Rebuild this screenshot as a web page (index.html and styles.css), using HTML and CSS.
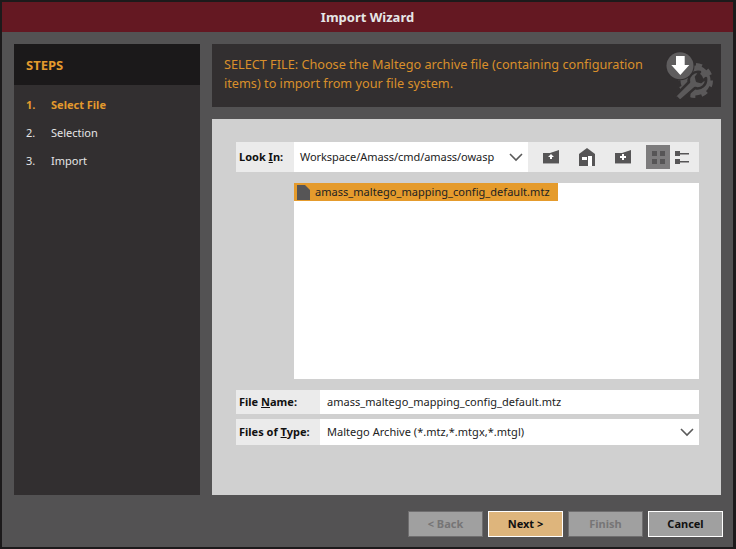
FILE: index.html
```html
<!DOCTYPE html>
<html lang="en">

<head>
    <meta charset="UTF-8">
    <title>Import Wizard</title>
    <link rel="stylesheet" href="styles.css">
</head>

<body>
    <div class="window">
        <div class="title-bar">Import Wizard</div>

        <div class="content">
            <div class="steps">
                <div class="steps-head">STEPS</div>
                <ol class="steps-list">
                    <li class="step step-active"><span class="step-num">1.</span>Select File</li>
                    <li class="step"><span class="step-num">2.</span>Selection</li>
                    <li class="step"><span class="step-num">3.</span>Import</li>
                </ol>
            </div>

            <div class="main">
                <div class="banner">
                    <p class="banner-text">SELECT FILE: Choose the Maltego archive file (containing configuration items) to import from your file system.</p>
                    <svg class="banner-icon" width="50" height="50" viewBox="0 0 50 50">
                        <circle cx="31.500" cy="30.500" r="11.500" fill="none" stroke="#5b595a" stroke-width="7" />
                        <circle cx="31.500" cy="30.500" r="15.500" fill="none" stroke="#5b595a" stroke-width="4" stroke-dasharray="6 6.170" />
                        <path fill="#322f30" d="M10 50L28 26 26 50z" />
                        <path fill="#5b595a" stroke="#322f30" stroke-width="2.500" stroke-linejoin="round" d="M11 46l14-14c-1-6 4-11 11-10l-4 5 1 4 4 1 5-4c1 7-5 12-11 10L16 51z" />
                        <circle cx="16" cy="15.700" r="14.500" fill="#322f30" />
                        <circle cx="16" cy="15.700" r="13.500" fill="#5f5d5e" />
                        <path fill="#fff" d="M12 6h8.700v9h4.600l-9 10-9-10h4.700z" />
                    </svg>
                </div>

                <div class="chooser">
                    <div class="look-row">
                        <label class="row-label look-label">Look <u>I</u>n:</label>
                        <div class="look-value">
                            <span class="look-path">Workspace/Amass/cmd/amass/owasp</span>
                            <svg width="14" height="9" viewBox="0 0 14 9">
                                <path d="M1 1l6 6 6-6" fill="none" stroke="#5a5a5a" stroke-width="1.600" />
                            </svg>
                        </div>
                        <div class="toolbar">
                            <button class="tool">
                                <svg width="16" height="14" viewBox="0 0 16 14">
                                    <path fill="#565556" d="M0 3h7l9-3v13H0z" />
                                    <path fill="#a9a8a9" d="M0 13h16v1H0z" />
                                    <path fill="#fff" d="M8 4l3 3H9v2H7V7H5z" />
                                </svg>
                            </button>
                            <button class="tool">
                                <svg width="16" height="18" viewBox="0 0 16 18">
                                    <path fill="#565556" d="M8 0l8 6v12H0V6z" />
                                    <path fill="#fff" d="M9 8h4v10H9zM3 9h5v3H3z" />
                                </svg>
                            </button>
                            <button class="tool tool-before">
                                <svg width="16" height="14" viewBox="0 0 16 14">
                                    <path fill="#565556" d="M0 3h7l9-3v13H0z" />
                                    <path fill="#a9a8a9" d="M0 13h16v1H0z" />
                                    <path fill="#fff" d="M7 4h2v2h2v2H9v2H7V8H5V6h2z" />
                                </svg>
                            </button>
                            <button class="tool tool-on">
                                <svg width="13" height="13" viewBox="0 0 13 13">
                                    <path fill="#565556" d="M0 0h5v5H0zM8 0h5v5H8zM0 8h5v5H0zM8 8h5v5H8z" />
                                </svg>
                            </button>
                            <button class="tool tool-last">
                                <svg width="14" height="13" viewBox="0 0 14 13">
                                    <path fill="#565556" d="M0 0h5v5H0zM5 2h9v1.500H5zM0 8h5v5H0zM5 10h9v1.500H5z" />
                                </svg>
                            </button>
                        </div>
                    </div>

                    <div class="file-list">
                        <div class="file-item">
                            <svg width="13" height="15" viewBox="0 0 13 15">
                                <path fill="#565556" d="M0 0h8l5 5v10H0z" />
                            </svg>
                            <span class="file-name">amass_maltego_mapping_config_default.mtz</span>
                        </div>
                    </div>

                    <div class="field-row name-row">
                        <label class="row-label field-label">File <u>N</u>ame:</label>
                        <div class="field-value">amass_maltego_mapping_config_default.mtz</div>
                    </div>
                    <div class="field-row type-row">
                        <label class="row-label field-label">Files of <u>T</u>ype:</label>
                        <div class="field-value">
                            <span>Maltego Archive (*.mtz,*.mtgx,*.mtgl)</span>
                            <svg width="14" height="9" viewBox="0 0 14 9">
                                <path d="M1 1l6 6 6-6" fill="none" stroke="#5a5a5a" stroke-width="1.600" />
                            </svg>
                        </div>
                    </div>
                </div>
            </div>
        </div>

        <div class="footer">
            <button class="btn btn-off">&lt; Back</button>
            <button class="btn btn-next">Next &gt;</button>
            <button class="btn btn-off">Finish</button>
            <button class="btn btn-cancel">Cancel</button>
        </div>
    </div>
</body>

</html>
```

FILE: styles.css
```css
html,
body {
    margin: 0;
    height: 100%;
}

body {
    font-family: "Noto Sans", sans-serif;
    font-size: 11px;
    background-color: #1c1a1b;
    overflow: hidden;
}

.window {
    box-sizing: border-box;
    width: 736px;
    height: 549px;
    padding: 2px 3px 2px 2px;
    display: flex;
    flex-direction: column;
}

.title-bar {
    height: 30px;
    line-height: 30px;
    flex: none;
    background-color: #641822;
    color: #e6e6e6;
    font-size: 13px;
    font-weight: 700;
    text-align: center;
}

.content {
    flex: 1;
    display: flex;
    gap: 12px;
    padding: 12px 12px 0;
    background-color: #535253;
}

.steps {
    width: 186px;
    flex: none;
    background-color: #322f30;
}

.steps-head {
    height: 41px;
    line-height: 43px;
    padding-left: 12px;
    background-color: #1b191a;
    color: #e39a2d;
    font-size: 13px;
    font-weight: 700;
}

.steps-list {
    list-style: none;
    margin: 0;
    padding: 6px 0 0 12px;
}

.step {
    height: 28px;
    line-height: 28px;
    color: #e6e6e6;
}

.step-active {
    color: #e39a2d;
    font-weight: 700;
}

.step-num {
    display: inline-block;
    width: 25px;
}

.main {
    flex: 1;
    display: flex;
    flex-direction: column;
    gap: 12px;
}

.banner {
    height: 63px;
    flex: none;
    display: flex;
    justify-content: space-between;
    align-items: flex-start;
    background-color: #322f30;
}

.banner-text {
    margin: 11px 0 0 12px;
    width: 430px;
    color: #d98f2b;
    font-size: 12.700px;
    line-height: 19px;
}

.banner-icon {
    margin: 6px 7px 0 0;
}

.chooser {
    flex: 1;
    padding: 23px 22px 0 24px;
    background-color: #d0d0d0;
}

.row-label {
    display: block;
    flex: none;
    padding-left: 3px;
    background-color: #ebebeb;
    color: #111;
    font-weight: 700;
}

.look-row {
    height: 30px;
    display: flex;
    line-height: 30px;
}

.look-label {
    width: 55px;
}

.look-value {
    width: 234px;
    box-sizing: border-box;
    flex: none;
    display: flex;
    justify-content: space-between;
    align-items: center;
    padding: 0 5px 0 6px;
    background-color: #fff;
    color: #222;
}

.look-path {
    letter-spacing: -0.060px;
}

.toolbar {
    flex: 1;
    display: flex;
    align-items: center;
    padding-left: 11px;
    background-color: #ebebeb;
}

.tool {
    width: 24px;
    height: 24px;
    padding: 0;
    margin-right: 12px;
    border: none;
    background: none;
    display: flex;
    align-items: center;
    justify-content: center;
}

.tool-before {
    margin-right: 11px;
}

.tool-on {
    margin-right: 4px;
    background-color: #7d7c7d;
}

.tool-last {
    width: 16px;
    margin-right: 0;
}

.file-list {
    height: 196px;
    margin: 11px 0 11px 58px;
    background-color: #fff;
}

.file-item {
    width: 264px;
    height: 18px;
    display: flex;
    align-items: center;
    gap: 5px;
    padding-left: 3px;
    box-sizing: border-box;
    background-color: #e59b2c;
    color: #222;
}

.file-name {
    margin-top: -2px;
    letter-spacing: 0.040px;
}

.field-row {
    display: flex;
}

.name-row {
    height: 24px;
    line-height: 24px;
    margin-bottom: 5px;
}

.type-row {
    height: 26px;
    line-height: 26px;
}

.field-label {
    width: 81px;
}

.field-value {
    flex: 1;
    display: flex;
    justify-content: space-between;
    align-items: center;
    padding: 0 5px 0 7px;
    background-color: #fff;
    color: #222;
    letter-spacing: 0.030px;
}

.footer {
    height: 52px;
    flex: none;
    box-sizing: border-box;
    padding: 16px 10px 0 0;
    display: flex;
    justify-content: flex-end;
    gap: 5px;
    background-color: #535253;
}

.btn {
    box-sizing: border-box;
    width: 75px;
    height: 26px;
    padding: 0 0 2px;
    font-family: inherit;
    font-size: 11px;
    font-weight: 700;
    border: 1px solid #fff;
    color: #111;
    background-color: #a0a0a0;
}

.btn-off {
    border-color: #6f6e6f;
    color: #767576;
}

.btn-next {
    background-color: #deb57c;
}
```
